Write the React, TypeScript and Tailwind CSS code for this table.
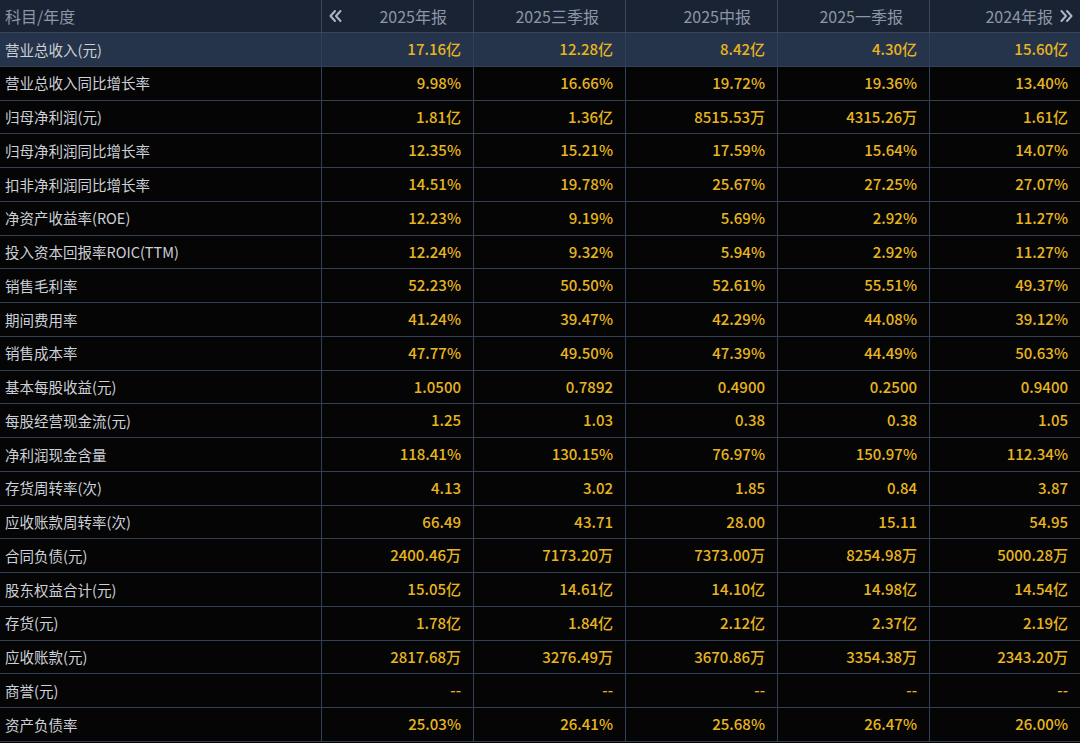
import React from "react";

type Row = { label: string; values: string[]; active?: boolean };

const columns = ["2025年报", "2025三季报", "2025中报", "2025一季报", "2024年报"];

const rows: Row[] = [
  { label: "营业总收入(元)", values: ["17.16亿", "12.28亿", "8.42亿", "4.30亿", "15.60亿"], active: true },
  { label: "营业总收入同比增长率", values: ["9.98%", "16.66%", "19.72%", "19.36%", "13.40%"] },
  { label: "归母净利润(元)", values: ["1.81亿", "1.36亿", "8515.53万", "4315.26万", "1.61亿"] },
  { label: "归母净利润同比增长率", values: ["12.35%", "15.21%", "17.59%", "15.64%", "14.07%"] },
  { label: "扣非净利润同比增长率", values: ["14.51%", "19.78%", "25.67%", "27.25%", "27.07%"] },
  { label: "净资产收益率(ROE)", values: ["12.23%", "9.19%", "5.69%", "2.92%", "11.27%"] },
  { label: "投入资本回报率ROIC(TTM)", values: ["12.24%", "9.32%", "5.94%", "2.92%", "11.27%"] },
  { label: "销售毛利率", values: ["52.23%", "50.50%", "52.61%", "55.51%", "49.37%"] },
  { label: "期间费用率", values: ["41.24%", "39.47%", "42.29%", "44.08%", "39.12%"] },
  { label: "销售成本率", values: ["47.77%", "49.50%", "47.39%", "44.49%", "50.63%"] },
  { label: "基本每股收益(元)", values: ["1.0500", "0.7892", "0.4900", "0.2500", "0.9400"] },
  { label: "每股经营现金流(元)", values: ["1.25", "1.03", "0.38", "0.38", "1.05"] },
  { label: "净利润现金含量", values: ["118.41%", "130.15%", "76.97%", "150.97%", "112.34%"] },
  { label: "存货周转率(次)", values: ["4.13", "3.02", "1.85", "0.84", "3.87"] },
  { label: "应收账款周转率(次)", values: ["66.49", "43.71", "28.00", "15.11", "54.95"] },
  { label: "合同负债(元)", values: ["2400.46万", "7173.20万", "7373.00万", "8254.98万", "5000.28万"] },
  { label: "股东权益合计(元)", values: ["15.05亿", "14.61亿", "14.10亿", "14.98亿", "14.54亿"] },
  { label: "存货(元)", values: ["1.78亿", "1.84亿", "2.12亿", "2.37亿", "2.19亿"] },
  { label: "应收账款(元)", values: ["2817.68万", "3276.49万", "3670.86万", "3354.38万", "2343.20万"] },
  { label: "商誉(元)", values: ["--", "--", "--", "--", "--"] },
  { label: "资产负债率", values: ["25.03%", "26.41%", "25.68%", "26.47%", "26.00%"] },
];

const grid = "grid grid-cols-[322px_152px_152px_152px_152px_150px]";

function Chevrons({ dir }: { dir: "left" | "right" }) {
  const d =
    dir === "left"
      ? "M7 2 L2.5 7 L7 12 M12.5 2 L8 7 L12.5 12"
      : "M2.5 2 L7 7 L2.5 12 M8 2 L12.5 7 L8 12";
  return (
    <svg width="15" height="14" viewBox="0 0 15 14" fill="none">
      <path d={d} stroke="#aeb6c4" strokeWidth="2" strokeLinecap="round" strokeLinejoin="round" />
    </svg>
  );
}

export default function App() {
  return (
    <div
      className="w-[1080px] h-[743px] overflow-hidden bg-[#050506] text-[14.5px]"
      style={{ fontFamily: '"Noto Sans CJK SC", "Noto Sans", sans-serif' }}
    >
      {/* header */}
      <div className={`${grid} h-[33px] bg-[#1a2333] border-b border-[#3a475b] text-[#8c96a6] text-[16px]`}>
        <div className="flex items-center pl-[5px] border-r border-[#3a475b]">科目/年度</div>
        {columns.map((c, i) => (
          <div
            key={c}
            className={`flex items-center ${i < 4 ? "border-r border-[#3a475b]" : ""} ${
              i === 0 ? "justify-between pl-[6px] pr-[26px]" : i === 4 ? "justify-end pr-[6px] gap-[6px]" : "justify-end pr-[26px]"
            }`}
          >
            {i === 0 && <Chevrons dir="left" />}
            <span>{c}</span>
            {i === 4 && <Chevrons dir="right" />}
          </div>
        ))}
      </div>

      {/* rows */}
      {rows.map((r) => (
        <div
          key={r.label}
          className={`${grid} h-[33.76px] border-b border-[#333f52] ${r.active ? "bg-[#25344a]" : ""}`}
        >
          <div className="flex items-center pl-[5px] border-r border-[#333f52] text-[#cdd0d6]">{r.label}</div>
          {r.values.map((v, i) => (
            <div
              key={i}
              className={`flex items-center justify-end pr-[12px] text-[#e8b51f] text-[15px] font-medium ${
                i < 4 ? "border-r border-[#333f52]" : ""
              }`}
            >
              {v}
            </div>
          ))}
        </div>
      ))}
    </div>
  );
}
